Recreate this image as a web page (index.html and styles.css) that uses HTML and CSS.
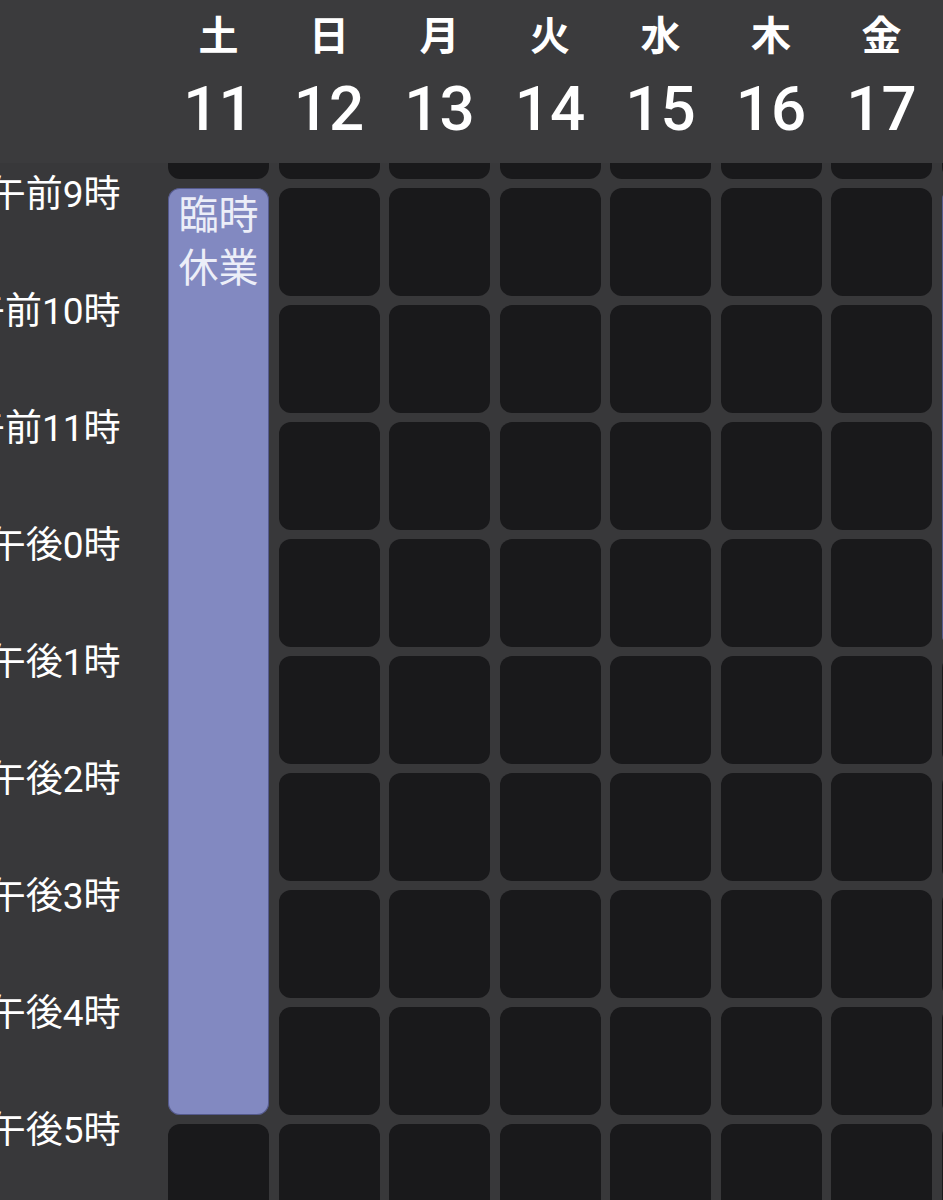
FILE: index.html
```html
<!DOCTYPE html>
<html lang="ja">
<head>
    <meta charset="UTF-8">
    <meta name="viewport" content="width=device-width, initial-scale=1.0">
    <title>予約カレンダー</title>
    <link rel="stylesheet" href="styles.css">
</head>
<body>
    <div class="calendar">
        <div class="week-header" id="week-header">
            <div class="corner"></div>
        </div>
        <div class="scroll-area">
            <div class="slots" id="slots"></div>
        </div>
    </div>

    <script>
        const days = [
            ['土', 11], ['日', 12], ['月', 13], ['火', 14],
            ['水', 15], ['木', 16], ['金', 17], ['土', 18]
        ];
        const hours = [8, 9, 10, 11, 12, 13, 14, 15, 16, 17, 18];

        // 臨時休業のブロック（列, 開始時, 時間数）
        const closed = [
            { day: 0, from: 9, span: 8, text: '臨時休業' },
            { day: 7, from: 9, span: 4, text: '臨時休業' }
        ];

        function hourLabel(h) {
            if (h < 12) return '午前' + h + '時';
            return '午後' + (h - 12) + '時';
        }

        const header = document.getElementById('week-header');
        days.forEach(([name, date]) => {
            const col = document.createElement('div');
            col.className = 'day';
            col.innerHTML = `<span class="day-name">${name}</span><span class="day-date">${date}</span>`;
            header.appendChild(col);
        });

        const slots = document.getElementById('slots');
        hours.forEach(h => {
            const label = document.createElement('div');
            label.className = 'time-label';
            label.innerHTML = `<span>${hourLabel(h)}</span>`;
            slots.appendChild(label);

            days.forEach((d, i) => {
                const block = closed.find(c => c.day === i && h >= c.from && h < c.from + c.span);
                if (block && h !== block.from) return;  // 上のブロックが占有
                const cell = document.createElement('div');
                if (block) {
                    cell.className = 'slot closed';
                    cell.style.gridRow = 'span ' + block.span;
                    cell.textContent = block.text;
                } else {
                    cell.className = 'slot';
                }
                slots.appendChild(cell);
            });
        });
    </script>
</body>
</html>
```

FILE: styles.css
```css
html, body {
    margin: 0;
    padding: 0;
    height: 100%;
    overflow: hidden;
}
body {
    background: #38383a;
    color: #fff;
    font-family: Roboto, "Noto Sans CJK JP", sans-serif;
}
.calendar {
    height: 1200px;
    display: flex;
    flex-direction: column;
}
.week-header {
    flex: 0 0 163px;
    display: grid;
    grid-template-columns: 158.5px repeat(8, 101px);
    column-gap: 9.5px;
    background: #3b3b3d;
    position: relative;
    z-index: 1;
}
.day {
    display: flex;
    flex-direction: column;
    align-items: center;
}
.day-name {
    margin-top: 12px;
    font-size: 40px;
    line-height: 50px;
    font-weight: 700;
}
.day-date {
    margin-top: 12px;
    font-size: 62px;
    line-height: 70px;
    font-weight: 500;
}
.scroll-area {
    flex: 1;
    overflow: hidden;
}
.slots {
    margin-top: -92px;
    display: grid;
    grid-template-columns: 158.5px repeat(8, 101px);
    grid-auto-rows: 108px;
    column-gap: 9.5px;
    row-gap: 9px;
}
.time-label {
    display: flex;
    justify-content: flex-end;
    align-self: start;
    margin-top: -17px;
    padding-right: 38px;
    font-size: 37px;
    line-height: 48px;
    white-space: nowrap;
}
.slot {
    background: #19191b;
    border-radius: 12px;
}
.slot.closed {
    background: #8289c1;
    color: #eceef8;
    font-size: 40px;
    line-height: 53px;
    text-align: center;
    padding: 1px 4px 0;
    box-shadow: inset 0 0 0 1px rgba(40, 44, 90, 0.5);
}
```
